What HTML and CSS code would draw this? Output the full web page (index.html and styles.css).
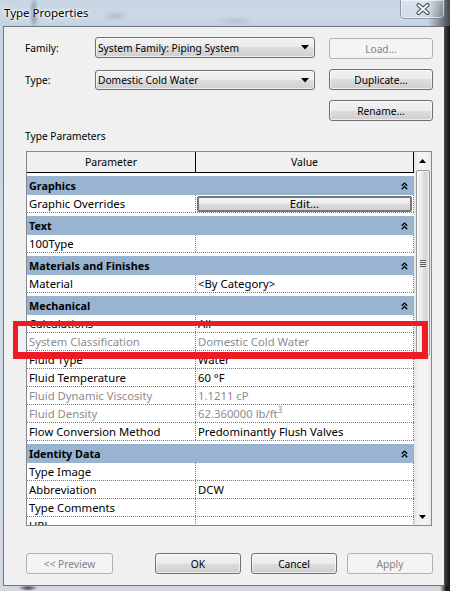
FILE: index.html
```html
<!DOCTYPE html>
<html>
<head>
<meta charset="utf-8">
<link rel="stylesheet" href="styles.css">
</head>
<body>
<div class="window">
  <div class="titlebar">
    <span class="title">Type Properties</span>
    <div class="close">
      <svg width="14" height="12" viewBox="0 0 14 12">
        <path d="M2.5 2 L11.5 10 M11.5 2 L2.5 10" stroke="#3d4652" stroke-width="4" stroke-linecap="round"/>
        <path d="M2.5 2 L11.5 10 M11.5 2 L2.5 10" stroke="#ffffff" stroke-width="2" stroke-linecap="round"/>
      </svg>
    </div>
  </div>
  <div class="mid">
    <div class="frame-left"></div>
    <div class="client">
      <div class="top-grid">
        <span class="lbl">Family:</span>
        <div class="combo"><span>System Family: Piping System</span><svg class="dd" width="8" height="5" viewBox="0 0 8 5"><path d="M0 0 H8 L4 4.5 Z" fill="#000"/></svg></div>
        <div class="btn disabled load">Load...</div>
        <span class="lbl">Type:</span>
        <div class="combo combo2"><span>Domestic Cold Water</span><svg class="dd" width="8" height="5" viewBox="0 0 8 5"><path d="M0 0 H8 L4 4.5 Z" fill="#000"/></svg></div>
        <div class="btn">Duplicate...</div>
        <span></span>
        <span></span>
        <div class="btn">Rename...</div>
      </div>
      <div class="section-label">Type Parameters</div>
      <div class="table">
        <div class="grid-area">
          <div class="thead">
            <div class="th param">Parameter</div>
            <div class="th value">Value</div>
          </div>
          <div class="tbody">
            <div class="group"><div class="gbar"><span>Graphics</span><svg class="chev" width="7" height="8" viewBox="0 0 7 8"><path d="M0.8 3.8 L3.5 1.1 L6.2 3.8 M0.8 7.2 L3.5 4.5 L6.2 7.2" stroke="#000" stroke-width="1.3" fill="none"/></svg></div></div>
            <div class="row"><div class="c1">Graphic Overrides</div><div class="c2 edit-cell"><div class="edit-btn">Edit...</div></div></div>
            <div class="group"><div class="gbar"><span>Text</span><svg class="chev" width="7" height="8" viewBox="0 0 7 8"><path d="M0.8 3.8 L3.5 1.1 L6.2 3.8 M0.8 7.2 L3.5 4.5 L6.2 7.2" stroke="#000" stroke-width="1.3" fill="none"/></svg></div></div>
            <div class="row"><div class="c1">100Type</div><div class="c2"></div></div>
            <div class="group"><div class="gbar"><span>Materials and Finishes</span><svg class="chev" width="7" height="8" viewBox="0 0 7 8"><path d="M0.8 3.8 L3.5 1.1 L6.2 3.8 M0.8 7.2 L3.5 4.5 L6.2 7.2" stroke="#000" stroke-width="1.3" fill="none"/></svg></div></div>
            <div class="row"><div class="c1">Material</div><div class="c2">&lt;By Category&gt;</div></div>
            <div class="group"><div class="gbar"><span>Mechanical</span><svg class="chev" width="7" height="8" viewBox="0 0 7 8"><path d="M0.8 3.8 L3.5 1.1 L6.2 3.8 M0.8 7.2 L3.5 4.5 L6.2 7.2" stroke="#000" stroke-width="1.3" fill="none"/></svg></div></div>
            <div class="row"><div class="c1">Calculations</div><div class="c2">All</div></div>
            <div class="row ro"><div class="c1">System Classification</div><div class="c2">Domestic Cold Water</div></div>
            <div class="row"><div class="c1">Fluid Type</div><div class="c2">Water</div></div>
            <div class="row"><div class="c1">Fluid Temperature</div><div class="c2">60 °F</div></div>
            <div class="row ro"><div class="c1">Fluid Dynamic Viscosity</div><div class="c2">1.1211 cP</div></div>
            <div class="row ro"><div class="c1">Fluid Density</div><div class="c2">62.360000 lb/ft<sup>3</sup></div></div>
            <div class="row"><div class="c1">Flow Conversion Method</div><div class="c2">Predominantly Flush Valves</div></div>
            <div class="group"><div class="gbar"><span>Identity Data</span><svg class="chev" width="7" height="8" viewBox="0 0 7 8"><path d="M0.8 3.8 L3.5 1.1 L6.2 3.8 M0.8 7.2 L3.5 4.5 L6.2 7.2" stroke="#000" stroke-width="1.3" fill="none"/></svg></div></div>
            <div class="row"><div class="c1">Type Image</div><div class="c2"></div></div>
            <div class="row"><div class="c1">Abbreviation</div><div class="c2">DCW</div></div>
            <div class="row"><div class="c1">Type Comments</div><div class="c2"></div></div>
            <div class="row"><div class="c1">URL</div><div class="c2"></div></div>
          </div>
        </div>
        <div class="scrollbar">
          <div class="sb-btn"><svg width="7" height="4" viewBox="0 0 7 4"><path d="M0 4 H7 L3.5 0 Z" fill="#000"/></svg></div>
          <div class="thumb"><div class="grip"></div></div>
          <div class="sb-btn down"><svg width="7" height="4" viewBox="0 0 7 4"><path d="M0 0 H7 L3.5 4 Z" fill="#000"/></svg></div>
        </div>
      </div>
      <div class="bottom">
        <div class="btn disabled preview">&lt;&lt; Preview</div>
        <div class="right-btns">
          <div class="btn">OK</div>
          <div class="btn">Cancel</div>
          <div class="btn disabled">Apply</div>
        </div>
      </div>
    </div>
    <div class="frame-right"></div>
  </div>
  <div class="frame-bottom"></div>
  <div class="annotation"></div>
</div>
</body>
</html>
```
FILE: styles.css
```css
html, body {
  margin: 0;
  padding: 0;
}
body {
  width: 450px;
  height: 591px;
  overflow: hidden;
  font-family: "Noto Sans", "Open Sans", sans-serif;
  font-size: 10.2px;
  color: #000;
}
.window {
  width: 450px;
  height: 591px;
  display: flex;
  flex-direction: column;
  position: relative;
  background: #c9d5e1;
}
.titlebar {
  height: 26px;
  flex: none;
  display: flex;
  align-items: flex-start;
  padding-left: 4px;
  box-sizing: border-box;
  background:
    radial-gradient(ellipse 5px 16px at 34px 13px, rgba(30,30,30,0.45), rgba(30,30,30,0) 100%),
    radial-gradient(ellipse 14px 6px at 115px 16px, rgba(90,100,110,0.22), rgba(90,100,110,0) 100%),
    radial-gradient(ellipse 20px 5px at 235px 21px, rgba(90,100,110,0.18), rgba(90,100,110,0) 100%),
    linear-gradient(90deg, rgba(20,20,20,0) 428px, rgba(20,20,20,0.75) 450px),
    linear-gradient(#c7d5e4, #cbd8e5 60%, #c5d3e1);
}
.title {
  font-size: 11.5px;
  line-height: 26px;
  text-shadow: 0 0 6px #fff, 0 0 3px #fff, 0 0 2px #fff;
}
.close {
  margin-left: auto;
  margin-right: 5px;
  width: 45px;
  height: 19px;
  box-sizing: border-box;
  border: 1px solid rgba(80, 95, 110, 0.55);
  border-top: none;
  border-radius: 0 0 5px 5px;
  box-shadow: inset 0 0 0 1px rgba(255,255,255,0.55);
  background: linear-gradient(rgba(255,255,255,0.35), rgba(255,255,255,0.1));
  display: flex;
  align-items: center;
  justify-content: center;
}
.mid {
  flex: 1;
  display: flex;
  min-height: 0;
}
.frame-left {
  width: 3px;
  background: linear-gradient(#c9d6e3, #d3dae2);
}
.frame-right {
  width: 5px;
  background: linear-gradient(90deg, #3a3a3a, #141414);
}
.frame-bottom {
  height: 5px;
  flex: none;
  background:
    radial-gradient(ellipse 10px 3px at 28px 2px, rgba(20,20,20,0.8), rgba(20,20,20,0) 100%),
    linear-gradient(90deg, #d3d9df 0, #d3d9df 440px, #1a1a1a 446px);
}
.client {
  width: 442px;
  box-sizing: border-box;
  border: 1px solid #6c7784;
  border-right-color: #4a4a4a;
  background: #f0f0f0;
  padding: 10px 11px 0 21px;
  display: flex;
  flex-direction: column;
}
.top-grid {
  display: grid;
  grid-template-columns: 70px 220px 1fr;
  grid-template-rows: 22px 21px 21px;
  row-gap: 10px;
}
.lbl {
  align-self: center;
  line-height: 14px;
}
.combo {
  height: 21px;
  box-sizing: border-box;
  border: 1px solid #707070;
  border-radius: 3px;
  background: linear-gradient(#f2f2f2 0%, #ebebeb 50%, #dddddd 50%, #cfcfcf 100%);
  box-shadow: inset 0 0 0 1px rgba(255,255,255,0.6);
  display: flex;
  align-items: center;
  padding: 0 5px 0 2px;
  align-self: start;
}
.combo2 {
  margin-top: 1px;
  height: 20px;
}
.combo span {
  flex: 1;
}
.dd {
  display: block;
}
.btn {
  height: 21px;
  box-sizing: border-box;
  border: 1px solid #707070;
  border-radius: 3px;
  background: linear-gradient(#f2f2f2 0%, #ebebeb 50%, #dddddd 50%, #cfcfcf 100%);
  box-shadow: inset 0 0 0 1px rgba(255,255,255,0.6);
  display: flex;
  align-items: center;
  justify-content: center;
  white-space: nowrap;
}
.top-grid .btn {
  width: 104px;
  justify-self: end;
  align-self: start;
}
.top-grid .load {
  margin-top: 1px;
}
.btn.disabled {
  border-color: #adb2b5;
  background: #f4f4f4;
  box-shadow: none;
  color: #838383;
}
.section-label {
  margin-top: 8px;
  line-height: 15px;
}
.table {
  margin-top: 7px;
  margin-left: 1px;
  width: 406px;
  height: 375px;
  box-sizing: border-box;
  border: 1px solid #828790;
  display: flex;
  flex: none;
}
.grid-area {
  width: 387px;
  display: flex;
  flex-direction: column;
  background: #fff;
  overflow: hidden;
}
.thead {
  display: flex;
  height: 21px;
  flex: none;
  box-sizing: border-box;
  border-bottom: 1px solid #000;
  background: #f0f0f0;
  font-size: 10.5px;
}
.th {
  box-sizing: border-box;
  border-right: 1px solid #000;
  text-align: center;
  line-height: 20px;
}
.th.param { width: 169px; }
.th.value { width: 218px; }
.tbody {
  font-size: 11.3px;
}
.group {
  height: 22px;
  padding-top: 3px;
  box-sizing: border-box;
}
.gbar {
  height: 19px;
  background: #99b4d1;
  display: flex;
  align-items: center;
  justify-content: space-between;
  padding: 0 6px 0 2px;
  font-weight: bold;
  font-size: 10.8px;
}
.chev {
  display: block;
}
.row {
  display: flex;
  height: 18px;
  box-sizing: border-box;
  border-bottom: 1px dotted #7a7a7a;
}
.c1, .c2 {
  box-sizing: border-box;
  border-right: 1px dotted #7a7a7a;
  padding-left: 2px;
  line-height: 17px;
  white-space: nowrap;
  overflow: hidden;
}
.c1 { width: 169px; }
.c2 { width: 218px; }
.row.ro {
  color: #8c8c8c;
}
.c2 sup {
  font-size: 8px;
  line-height: 0;
  vertical-align: 5px;
}
.edit-cell {
  padding: 1px 1px 0 1px;
}
.edit-btn {
  height: 16px;
  box-sizing: border-box;
  border: 2px solid #767676;
  border-radius: 2px;
  background: linear-gradient(#f4f4f4 0%, #ececec 45%, #dcdcdc 55%, #d0d0d0 100%);
  text-align: center;
  line-height: 12px;
}
.scrollbar {
  width: 17px;
  display: flex;
  flex-direction: column;
  background: linear-gradient(90deg, #e4e4e4 0%, #f3f3f3 25%, #f3f3f3 75%, #ebebeb 100%);
}
.sb-btn {
  height: 17px;
  flex: none;
  display: flex;
  align-items: center;
  justify-content: center;
}
.sb-btn svg { display: block; }
.sb-btn.down {
  margin-top: auto;
}
.thumb {
  margin: 1px 0 0 2px;
  width: 14px;
  height: 186px;
  box-sizing: border-box;
  border: 1px solid #979797;
  border-radius: 2px;
  background: linear-gradient(90deg, #f3f3f3 0%, #e9e9e9 50%, #dcdcdc 51%, #d6d6d6 100%);
  box-shadow: inset 0 0 0 1px rgba(255,255,255,0.7);
  display: flex;
  align-items: center;
  justify-content: center;
}
.grip {
  width: 6px;
  height: 7px;
  background: repeating-linear-gradient(#5a5a5a 0, #5a5a5a 1px, #e8e8e8 1px, #e8e8e8 2px);
}
.bottom {
  margin-top: 27px;
  display: flex;
}
.preview {
  width: 87px;
  margin-left: 1px;
}
.right-btns {
  margin-left: auto;
  display: flex;
  gap: 10px;
}
.right-btns .btn {
  width: 86px;
}
.annotation {
  position: absolute;
  left: 13px;
  top: 321px;
  width: 415px;
  height: 38px;
  box-sizing: border-box;
  border: 5px solid #ed1c24;
  border-right-width: 6px;
  border-bottom-width: 7px;
}
```
